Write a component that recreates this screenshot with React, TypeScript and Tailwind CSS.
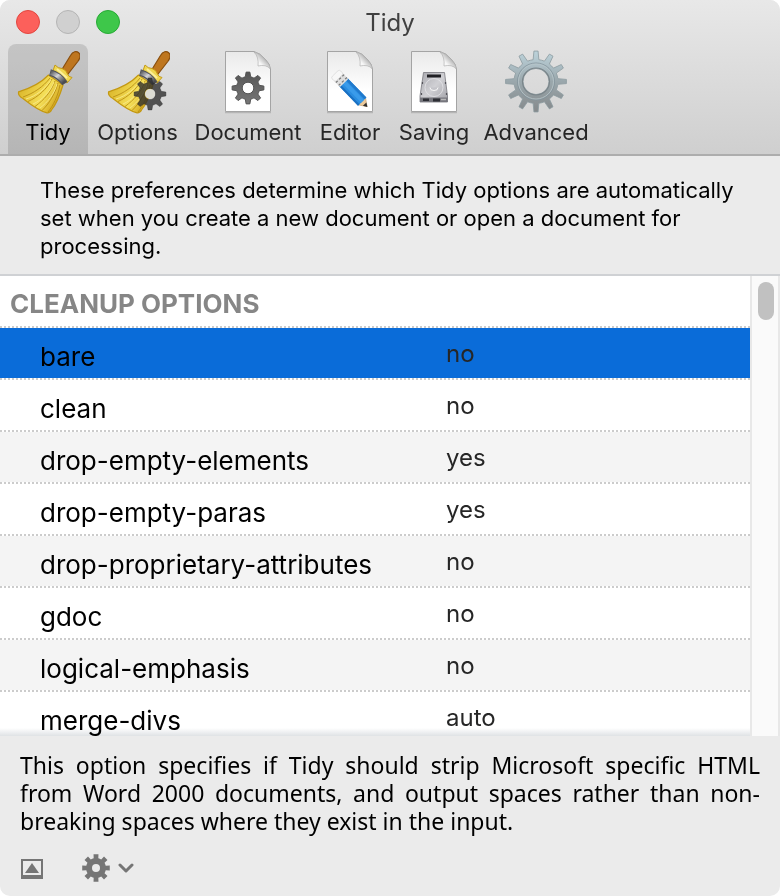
import { useState, type ReactNode } from "react";

function gearPath(cx: number, cy: number, outer: number, root: number, teeth: number, hole: number, tip = 0.26, base = 0.5) {
  const step = (Math.PI * 2) / teeth;
  const at = (r: number, a: number) => `${(cx + r * Math.cos(a)).toFixed(2)} ${(cy + r * Math.sin(a)).toFixed(2)}`;
  let d = "";
  for (let i = 0; i < teeth; i++) {
    const a = i * step - Math.PI / 2;
    const b = (step * base) / 2;
    const t = (step * tip) / 2;
    d += `${i === 0 ? "M" : `A${root} ${root} 0 0 1 `}${at(root, a - b)}L${at(outer, a - t)}L${at(outer, a + t)}L${at(root, a + b)}`;
  }
  d += `A${root} ${root} 0 0 1 ${at(root, -Math.PI / 2 - (step * base) / 2)}Z`;
  return `${d}M${cx - hole} ${cy}a${hole} ${hole} 0 1 0 ${hole * 2} 0a${hole} ${hole} 0 1 0 ${-hole * 2} 0Z`;
}

function Broom({ id, gear = false }: { id: string; gear?: boolean }) {
  return (
    <svg width="64" height="64" viewBox="0 0 64 64" aria-hidden="true">
      <defs>
        <linearGradient id={`${id}-straw`} x1="0.1" y1="0.3" x2="0.9" y2="0.7">
          <stop offset="0" stopColor="#dcb92e" />
          <stop offset="0.35" stopColor="#ebcf45" />
          <stop offset="0.6" stopColor="#f5e05a" />
          <stop offset="1" stopColor="#d3a51c" />
        </linearGradient>
        <linearGradient id={`${id}-band`} x1="0" y1="0" x2="1" y2="0.8">
          <stop offset="0" stopColor="#5f6064" />
          <stop offset="0.45" stopColor="#d4d5d8" />
          <stop offset="0.65" stopColor="#96979b" />
          <stop offset="1" stopColor="#4c4d50" />
        </linearGradient>
      </defs>
      <path d="M45 21L54.500 5.500C57 1 60.500 0.800 62.800 2.800C65 5 64 8.500 61.800 11.500L52 24Z" fill="#be761f" stroke="#8a4f0d" strokeWidth="1.200" />
      <path d="M39 15Q42 18.500 46 18.500Q50.500 20 51.500 24Q52.500 27 56 27.500L51 33L36.500 22Z" fill="#f0d750" stroke="#c49a16" strokeWidth="1" />
      <path d="M41 19L51 28" stroke="#fbef9c" strokeWidth="2" />
      <path d="M32.500 25C24 34 12 39 2.500 41.800C2 45 4 47 7 48.500C14 54 22 60.500 31 62.800Q34 63 35.500 60C41 53 44 45 47 35Z" fill={`url(#${id}-straw)`} stroke="#c39812" strokeWidth="1.200" strokeLinejoin="round" />
      <g fill="none" stroke="#b98f14" strokeWidth="0.900">
        <path d="M34 28C27 37 18 43 7 47" />
        <path d="M36 29C31 39 22 47 12 51.500" />
        <path d="M39 31C35 42 28 50 19 56.500" />
        <path d="M42 33C39 44 33 54 26 60.500" />
        <path d="M44 35C42 46 37 56 32 62" />
      </g>
      <g fill="none" stroke="#f7e784" strokeWidth="1">
        <path d="M35 30C29 39 20 46 10 49" />
        <path d="M38 32C34 42 26 50 17 54" />
        <path d="M41 34C38 44 32 52 24 58" />
      </g>
      <path d="M34 22.500Q43 25 49 33.500" fill="none" stroke="#55565a" strokeWidth="6.500" strokeLinecap="butt" />
      <path d="M34.500 22.700Q43 25 48.700 33" fill="none" stroke={`url(#${id}-band)`} strokeWidth="4.500" strokeLinecap="butt" />
      {gear && <path d={gearPath(44, 44, 16, 11.5, 8, 5.5, 0.3, 0.6)} fill="#2b2b2b" fillOpacity="0.78" fillRule="evenodd" stroke="#2b2b2b" strokeOpacity="0.4" strokeLinejoin="round" />}
      {gear && <circle cx="44" cy="44" r="5" fill="#dcdcd4" />}
    </svg>
  );
}

function Paper({ id, children }: { id: string; children: ReactNode }) {
  return (
    <svg width="48" height="64" viewBox="0 0 48 64" aria-hidden="true">
      <defs>
        <linearGradient id={`${id}-page`} x1="0" y1="0" x2="0" y2="1">
          <stop offset="0" stopColor="#e9e9e9" />
          <stop offset="0.65" stopColor="#ffffff" />
        </linearGradient>
        <linearGradient id={`${id}-fold`} x1="0" y1="1" x2="0.8" y2="0.2">
          <stop offset="0" stopColor="#ffffff" />
          <stop offset="0.45" stopColor="#f6f6f6" />
          <stop offset="1" stopColor="#8f8f8f" />
        </linearGradient>
      </defs>
      <path d="M1 62.500H47" stroke="#000" strokeOpacity="0.15" strokeWidth="1.500" />
      <path d="M1.500 1.500H30Q36 3 41 9Q46 14 46.500 19V61.500H1.500Z" fill={`url(#${id}-page)`} stroke="#a4a4a4" />
      <path d="M30 2Q35 7 34 16Q42 14 46.500 19Q46 14 41 9Q36 3 30 2Z" fill={`url(#${id}-fold)`} stroke="#a8a8a8" strokeWidth="0.600" />
      {children}
    </svg>
  );
}

function DocumentIcon() {
  return (
    <Paper id="document">
      <linearGradient id="document-gear" x1="0" y1="0" x2="0" y2="1">
        <stop offset="0" stopColor="#555" />
        <stop offset="1" stopColor="#777" />
      </linearGradient>
      <path d={gearPath(24, 38, 16, 11.5, 8, 5.8, 0.3, 0.6)} fill="url(#document-gear)" stroke="#555" strokeLinejoin="round" fillRule="evenodd" />
    </Paper>
  );
}

function EditorIcon() {
  return (
    <Paper id="editor">
      <g transform="translate(10.500 25) rotate(46)">
        <path d="M36 -5.500L44 0L36 5.500Z" fill="#ecc99a" stroke="#b99564" strokeWidth="0.500" />
        <path d="M40.500 -2.400L44.500 0L40.500 2.400Z" fill="#303030" />
        <rect x="10" y="-5.800" width="27" height="11.600" fill="#2a8de0" />
        <rect x="10" y="-5.800" width="27" height="2.500" fill="#2079cc" />
        <rect x="10" y="-2.500" width="27" height="4" fill="#3a9bea" />
        <rect x="10" y="3.800" width="27" height="2" fill="#1a70c2" />
        <rect x="3" y="-5.800" width="8" height="11.600" fill="#dedede" />
        <path d="M5 -5.800V5.800M9 -5.800V5.800" stroke="#777" strokeWidth="1.200" strokeDasharray="2.500 2" />
        <rect x="-2" y="-5.800" width="6" height="11.600" rx="2" fill="#f7f7f7" stroke="#ccc" strokeWidth="0.500" />
      </g>
    </Paper>
  );
}

function SavingIcon() {
  return (
    <Paper id="saving">
      <linearGradient id="saving-disk" x1="0" y1="0" x2="1" y2="1">
        <stop offset="0" stopColor="#a8a8ae" />
        <stop offset="0.5" stopColor="#d0d0d4" />
        <stop offset="1" stopColor="#a0a0a6" />
      </linearGradient>
      <path d="M13.500 22.500H34.500L37.500 46V52H10V46Z" fill="url(#saving-disk)" stroke="#77777d" strokeWidth="0.800" strokeLinejoin="round" />
      <path d="M17 24.500H31V27.500H17Z" fill="#202024" />
      <path d="M10 47.500H37.500V52H10Z" fill="#76767d" />
      <path d="M13 48.500H19V51H13ZM23 48.500H30V51.500H23Z" fill="#2d2e34" />
      <path d="M31 49.500H36" stroke="#b8b8b8" strokeWidth="1.500" />
      <circle cx="24" cy="37.500" r="9" fill="none" stroke="#e4e4e8" strokeWidth="0.800" />
      <path d="M20 37.500Q20 40.500 24 40.500Q28 40.500 28 37.500" fill="#c4c4c9" stroke="#f7f7f7" strokeWidth="1" />
      <path d="M12.500 32V34M35.500 32V34M11.500 43V45M36.500 43V45" stroke="#55555b" strokeWidth="1.200" />
    </Paper>
  );
}

function AdvancedIcon() {
  return (
    <svg width="64" height="64" viewBox="0 0 64 64" aria-hidden="true">
      <defs>
        <linearGradient id="advanced-metal" x1="0" y1="0" x2="0" y2="1">
          <stop offset="0" stopColor="#bdd3db" />
          <stop offset="0.5" stopColor="#9aa7ac" />
          <stop offset="1" stopColor="#85898b" />
        </linearGradient>
      </defs>
      <path d={gearPath(32, 31.5, 30.5, 22, 12, 13, 0.26, 0.5)} fill="url(#advanced-metal)" stroke="#8b9a9f" strokeWidth="0.800" strokeLinejoin="round" fillRule="evenodd" />
      <circle cx="32" cy="31.500" r="18.500" fill="none" stroke="#82929a" strokeWidth="0.800" />
      <circle cx="32" cy="31.500" r="17.500" fill="none" stroke="#b9c6ca" strokeWidth="0.800" />
      <circle cx="32" cy="31.500" r="13.500" fill="none" stroke="#7a858a" strokeWidth="1.200" />
    </svg>
  );
}

const panes = [
  { name: "Tidy", width: "w-20", icon: <Broom id="tidy" /> },
  { name: "Options", width: "w-[99px]", icon: <Broom id="options" gear /> },
  { name: "Document", width: "w-[122px]", icon: <DocumentIcon /> },
  { name: "Editor", width: "w-[82px]", icon: <EditorIcon /> },
  { name: "Saving", width: "w-[86px]", icon: <SavingIcon /> },
  { name: "Advanced", width: "w-[118px]", icon: <AdvancedIcon /> },
];

const options = [
  ["bare", "no"],
  ["clean", "no"],
  ["drop-empty-elements", "yes"],
  ["drop-empty-paras", "yes"],
  ["drop-proprietary-attributes", "no"],
  ["gdoc", "no"],
  ["logical-emphasis", "no"],
  ["merge-divs", "auto"],
];

const dotted = "bg-[repeating-linear-gradient(90deg,#cccccc_0_2px,#ffffff_2px_4px)] bg-[length:100%_2px] bg-bottom bg-no-repeat";

export default function App() {
  const [pane, setPane] = useState("Tidy");
  const [selected, setSelected] = useState("bare");

  return (
    <div className="h-screen bg-white">
      <div className="flex h-full flex-col overflow-hidden rounded-[10px] bg-[#ebebeb] font-['Inter',sans-serif] text-black">
        <header className="border-b-2 border-[#adadad] bg-linear-to-b from-[#e8e8e8] to-[#cfcfcf]">
          <div className="grid h-11 grid-cols-[1fr_auto_1fr] items-center">
            <div className="flex gap-4 pl-4">
              <button type="button" aria-label="Close" className="size-6 rounded-full border border-[#e2463f] bg-[#fc605b]" />
              <button type="button" aria-label="Minimize" className="size-6 rounded-full border border-[#b4b4b4] bg-[#d0d0d0]" />
              <button type="button" aria-label="Zoom" className="size-6 rounded-full border border-[#27aa35] bg-[#3ec74a]" />
            </div>
            <h1 className="pt-0.5 text-2xl text-[#404040]">Tidy</h1>
          </div>
          <nav aria-label="Preference panes" className="flex px-2">
            {panes.map(({ name, width, icon }) => (
              <button
                key={name}
                type="button"
                aria-pressed={pane === name}
                onClick={() => setPane(name)}
                className={`${width} flex h-[110px] flex-col items-center rounded-t-lg pt-1.5 ${pane === name ? "bg-black/12 text-black" : "text-[#262626]"}`}
              >
                {icon}
                <span className="mt-1 text-[22px] leading-7">{name}</span>
              </button>
            ))}
          </nav>
        </header>

        <p className="px-10 pt-5 pb-3.5 text-[22px] leading-7">
          These preferences determine which Tidy options are automatically set when you create a new document or open a document for processing.
        </p>

        <main className="flex min-h-0 flex-1 border-t-2 border-[#cfd1d4] bg-white">
          <div className="relative min-w-0 flex-1 overflow-hidden">
            <table className="w-full table-fixed border-collapse text-left">
              <colgroup>
                <col className="w-[446px]" />
                <col />
              </colgroup>
              <thead>
                <tr className={`h-[52px] ${dotted}`}>
                  <th colSpan={2} className="px-2.5 pt-1 text-[26px] leading-8 font-bold text-[#868686]">CLEANUP OPTIONS</th>
                </tr>
              </thead>
              <tbody>
                {options.map(([name, value], i) => (
                  <tr
                    key={name}
                    aria-selected={selected === name}
                    onClick={() => setSelected(name)}
                    className={`h-[52px] ${dotted} ${selected === name ? "bg-[#0a6cd9]" : i % 2 ? "bg-white" : "bg-[#f4f4f4]"}`}
                  >
                    <td className="pt-1.5 pl-10 text-[26px] leading-8">{name}</td>
                    <td className="text-2xl text-[#262626]">{value}</td>
                  </tr>
                ))}
              </tbody>
            </table>
            <div className="pointer-events-none absolute inset-x-0 bottom-0 h-2 bg-linear-to-b from-white to-[#dfe2e5] mix-blend-multiply" />
          </div>
          <div className="w-[30px] border-x-2 border-[#e8e8e8] bg-[#fafafa] pt-1.5 pl-1.5">
            <div className="h-[38px] w-4 rounded-full bg-[#c1c1c1]" />
          </div>
        </main>

        <footer className="px-5 pt-[15px] pb-3">
          <p className="text-justify font-['Noto_Sans',sans-serif] text-[23px] leading-7">
            This option specifies if Tidy should strip Microsoft specific HTML from Word 2000 documents, and output spaces rather than non-breaking spaces where they exist in the input.
          </p>
          <div className="mt-[17px] flex h-8 items-center gap-9 text-[#757575]">
            <button type="button" aria-label="Toggle description">
              <svg width="24" height="24" viewBox="0 0 24 24" fill="currentColor" aria-hidden="true">
                <path fillRule="evenodd" d="M1 3H23V23H1ZM3 5V19H21V5Z" />
                <path d="M12 7L19 17H5Z" />
              </svg>
            </button>
            <button type="button" aria-label="Actions" className="flex items-center gap-1.5">
              <svg width="32" height="32" viewBox="0 0 32 32" fill="currentColor" aria-hidden="true">
                <path fillRule="evenodd" d={gearPath(16, 16, 14, 10, 8, 4, 0.45, 0.6)} />
              </svg>
              <svg width="16" height="10" viewBox="0 0 16 10" fill="none" stroke="currentColor" strokeWidth="3" strokeLinecap="round" strokeLinejoin="round" aria-hidden="true">
                <path d="M2 2L8 8L14 2" />
              </svg>
            </button>
          </div>
        </footer>
      </div>
    </div>
  );
}
